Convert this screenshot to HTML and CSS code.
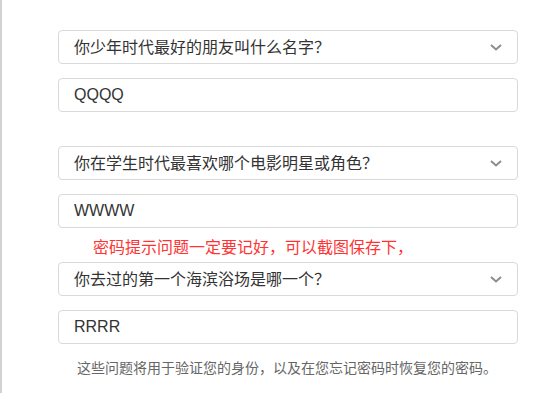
FILE: index.html
```html
<!DOCTYPE html>
<html lang="zh-CN">
	<head>
		<meta charset="UTF-8" />
		<meta name="viewport" content="width=device-width, initial-scale=1.0" />
		<title>密保问题</title>
		<link rel="stylesheet" href="styles.css">
	</head>

	<body>
		<div class="page">
			<form class="form">
				<div class="group">
					<div class="sel">
						<select class="inp">
							<option>你少年时代最好的朋友叫什么名字？</option>
						</select>
						<svg class="arrow" width="12" height="7" viewBox="0 0 12 7"><path d="M1 1 L6 5.5 L11 1" fill="none" stroke="#8c8c8c" stroke-width="2"/></svg>
					</div>
					<input type="text" class="inp" value="QQQQ" />
				</div>
				<div class="group">
					<div class="sel">
						<select class="inp">
							<option>你在学生时代最喜欢哪个电影明星或角色？</option>
						</select>
						<svg class="arrow" width="12" height="7" viewBox="0 0 12 7"><path d="M1 1 L6 5.5 L11 1" fill="none" stroke="#8c8c8c" stroke-width="2"/></svg>
					</div>
					<input type="text" class="inp" value="WWWW" />
					<div class="tip">密码提示问题一定要记好，可以截图保存下，</div>
				</div>
				<div class="group">
					<div class="sel">
						<select class="inp">
							<option>你去过的第一个海滨浴场是哪一个？</option>
						</select>
						<svg class="arrow" width="12" height="7" viewBox="0 0 12 7"><path d="M1 1 L6 5.5 L11 1" fill="none" stroke="#8c8c8c" stroke-width="2"/></svg>
					</div>
					<input type="text" class="inp" value="RRRR" />
				</div>
				<p class="help">这些问题将用于验证您的身份，以及在您忘记密码时恢复您的密码。</p>
			</form>
		</div>
	</body>
</html>
```

FILE: styles.css
```css
* {
	box-sizing: border-box;
	margin: 0;
	padding: 0;
}

body {
	font-family: "Liberation Sans", "Noto Sans CJK SC", sans-serif;
	color: #333;
	background: #fff;
}

.page {
	border-left: 2px solid #d2d2d2;
	min-height: 100vh;
	padding: 30px 0 0 56px;
}

.form {
	width: 460px;
}

.group {
	display: flex;
	flex-direction: column;
	gap: 14px;
	margin-bottom: 34px;
}

.group:has(.tip) {
	margin-bottom: 0;
	gap: 0;
}

.group:has(.tip) .sel {
	margin-bottom: 14px;
}

.sel {
	position: relative;
}

.inp {
	display: block;
	width: 100%;
	height: 34px;
	border: 1px solid #d9d9d9;
	border-radius: 4px;
	padding: 0 15px;
	font-family: "Liberation Sans", "Noto Sans CJK SC", sans-serif;
	font-size: 16px;
	color: #333;
	background: #fff;
	outline: 0;
	appearance: none;
	-webkit-appearance: none;
}

.arrow {
	position: absolute;
	right: 16px;
	top: 14px;
}

.tip {
	color: #f33;
	font-size: 16px;
	line-height: 20px;
	margin: 10px 0 4px 35px;
}

.help {
	margin-top: -20px;
	margin-left: -2px;
	font-size: 14px;
	line-height: 20px;
	color: #666;
	text-align: center;
}
```
